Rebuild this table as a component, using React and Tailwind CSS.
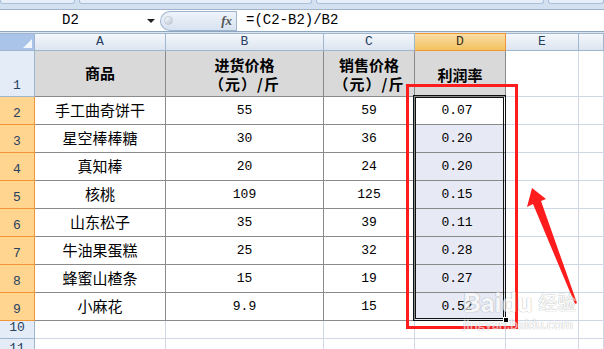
import React from 'react';

// column widths include the right border line
const colWidths = '35px 131px 158px 91px 91px 73px 1fr';
const cols = ['A', 'B', 'C', 'D', 'E', 'F'];

const rows = [
  { name: '手工曲奇饼干', buy: '55', sell: '59', rate: '0.07' },
  { name: '星空棒棒糖', buy: '30', sell: '36', rate: '0.20' },
  { name: '真知棒', buy: '20', sell: '24', rate: '0.20' },
  { name: '核桃', buy: '109', sell: '125', rate: '0.15' },
  { name: '山东松子', buy: '35', sell: '39', rate: '0.11' },
  { name: '牛油果蛋糕', buy: '25', sell: '32', rate: '0.28' },
  { name: '蜂蜜山楂条', buy: '15', sell: '19', rate: '0.27' },
  { name: '小麻花', buy: '9.9', sell: '15', rate: '0.52' },
];

const mono = "font-['Liberation_Mono',monospace]";
const cjk = "font-['Noto_Sans_CJK_SC',sans-serif]";

const RowHead = ({ n, active }) => (
  <div
    className={
      active
        ? `flex items-end justify-center pb-[1px] border-r border-b border-[#f29536] bg-[#ffd590] text-[13px] text-[#27415f] ${mono}`
        : `flex items-end justify-center pb-[1px] border-r border-b border-[#9eb6ce] bg-[#e4ecf7] text-[13px] text-[#27415f] ${mono}`
    }
  >
    {n}
  </div>
);

const Cell = ({ inTable, children, className = '' }) => (
  <div
    className={
      (inTable
        ? 'border-r border-b border-[#8a8a8a] '
        : 'border-r border-b border-[#d0d7e5] ') +
      'flex items-center justify-center overflow-hidden ' +
      className
    }
  >
    {children}
  </div>
);

// two-line bold heading used in B1 and C1
const TwoLine = ({ top }) => (
  <div className="flex flex-col items-center pt-[1px]">
    <div className="leading-[19px]">{top}</div>
    <div className="leading-[19px] tracking-[1px]">（元）/斤</div>
  </div>
);

const App = () => {
  return (
    <div className="relative w-[604px] h-[349px] overflow-hidden bg-white flex flex-col">
      {/* ribbon bottom edge */}
      <div className="h-[10px] shrink-0 bg-[#d3e0f0] border-b border-[#9fb3cb] flex gap-[4px] items-start">
        <div className="w-[75px] h-[4px] bg-[#e7eef8] border border-t-0 border-[#a9c0dc] rounded-b-[3px]" />
        <div className="w-[233px] h-[4px] bg-[#e7eef8] border border-t-0 border-[#a9c0dc] rounded-b-[3px]" />
        <div className="w-[228px] h-[4px] bg-[#e7eef8] border border-t-0 border-[#a9c0dc] rounded-b-[3px]" />
        <div className="flex-1 h-[4px] bg-[#e7eef8] border border-t-0 border-[#a9c0dc] rounded-b-[3px]" />
      </div>

      {/* formula bar */}
      <div className="h-[22px] shrink-0 flex items-center bg-white border-b border-[#8fa6c1]">
        <div className={`w-[141px] text-center text-[14px] text-black ${mono}`}>D2</div>
        <div className="w-[19px] flex justify-center">
          <div className="w-0 h-0 border-l-[4px] border-r-[4px] border-t-[4px] border-l-transparent border-r-transparent border-t-[#222]" />
        </div>
        <div className="w-[76px] h-[20px] flex items-center justify-between pl-[3px] pr-[4px] rounded-l-full border border-r-0 border-[#9fb4cd] bg-gradient-to-b from-[#eef3fa] to-[#d8e3f1]">
          <div className="w-[9px] h-[9px] rounded-full bg-gradient-to-br from-white to-[#b9c4d2] border border-[#c4ccd8]" />
          <span className="font-['Liberation_Serif',serif] italic font-bold text-[13px] text-[#555]">fx</span>
        </div>
        <div className="w-px h-[20px] bg-[#9fb4cd]" />
        <div className={`pl-[9px] text-[14px] text-black ${mono}`}>=(C2-B2)/B2</div>
      </div>
      <div className="h-px shrink-0 bg-[#dbe5f1]" />

      {/* sheet grid */}
      <div
        className="grid flex-1"
        style={{
          gridTemplateColumns: colWidths,
          gridTemplateRows: '18px 46px repeat(8, 28px) 18px 1fr',
        }}
      >
        {/* corner + column headers */}
        <div className="flex items-end justify-end p-[2px] border-t border-r border-b border-[#9eb6ce] bg-[#a9c4e8]">
          <svg width="9" height="9">
            <polygon points="9,0 9,9 0,9" fill="#f3f7fc" />
          </svg>
        </div>
        {cols.map((c) => (
          <div
            key={c}
            className={
              c === 'D'
                ? `flex items-center justify-center border-t border-r border-b border-[#f29536] bg-gradient-to-b from-[#f9dda4] to-[#f3c25f] text-[13px] text-[#3a3020] ${mono}`
                : `flex items-center justify-center border-t border-r border-b border-[#9eb6ce] bg-gradient-to-b from-[#f4f7fb] to-[#dce5f0] text-[13px] text-[#27415f] ${mono}`
            }
          >
            {c === 'F' ? '' : c}
          </div>
        ))}

        {/* row 1: headings */}
        <RowHead n="1" />
        <Cell inTable className={`bg-[#d9d9d9] font-bold text-[15px] text-black ${cjk}`}>商品</Cell>
        <Cell inTable className={`bg-[#d9d9d9] font-bold text-[15px] text-black ${cjk}`}>
          <TwoLine top="进货价格" />
        </Cell>
        <Cell inTable className={`bg-[#d9d9d9] font-bold text-[15px] text-black ${cjk}`}>
          <TwoLine top="销售价格" />
        </Cell>
        <Cell inTable className={`bg-[#d9d9d9] font-bold text-[15px] pt-[3px] text-black ${cjk}`}>利润率</Cell>
        <Cell />
        <Cell />

        {/* data rows */}
        {rows.map((r, i) => (
          <React.Fragment key={r.name}>
            <RowHead n={i + 2} active />
            <Cell inTable className={`text-[15px] text-black ${cjk}`}>{r.name}</Cell>
            <Cell inTable className={`text-[13px] text-black pt-[1px] ${mono}`}>{r.buy}</Cell>
            <Cell inTable className={`text-[13px] text-black pt-[1px] ${mono}`}>{r.sell}</Cell>
            <Cell
              inTable
              className={
                i === 0
                  ? `bg-white text-[13px] text-black pt-[1px] pr-[6px] ${mono}`
                  : `bg-[#e7eaf4] text-[13px] text-black pt-[1px] pr-[6px] ${mono}`
              }
            >
              {r.rate}
            </Cell>
            <Cell />
            <Cell />
          </React.Fragment>
        ))}

        {/* rows 10 and 11 */}
        {['10', '11'].map((n) => (
          <React.Fragment key={n}>
            <RowHead n={n} />
            {cols.map((c) => (
              <Cell key={c} />
            ))}
          </React.Fragment>
        ))}
      </div>

      {/* selection border around D2:D9 */}
      <div className="absolute left-[413px] top-[95px] w-[93px] h-[226px] border-[3px] border-double border-[#111] pointer-events-none" />
      <div className="absolute left-[503px] top-[317px] w-[6px] h-[6px] bg-black border border-white pointer-events-none" />

      {/* red highlight box */}
      <div className="absolute left-[406px] top-[84px] w-[112px] h-[245px] border-[3px] border-[#ff1c1c] pointer-events-none" />

      {/* red arrow */}
      <svg className="absolute left-0 top-0 pointer-events-none" width="604" height="349">
        <polygon
          points="532,188 546,199 541,201 577,303 575,304 533,204 527,207"
          fill="#ff1c1c"
        />
      </svg>

      {/* watermark */}
      <div className="absolute left-[463px] top-[288px] pointer-events-none opacity-60 flex flex-col items-start">
        <div className="flex items-center gap-[6px] h-[28px]">
          <span className="font-['Lato',sans-serif] font-black text-[27px] leading-[28px] text-white [text-shadow:0_0_1px_#888,0_0_1px_#888]">Baidu</span>
          <span className={`text-[19px] leading-[28px] text-white [text-shadow:0_0_1px_#888,0_0_1px_#888] ${cjk}`}>经验</span>
        </div>
        <span className="font-['Lato',sans-serif] text-[14px] leading-[16px] text-white [text-shadow:0_0_1px_#999,0_0_1px_#999]">jingyan.baidu.com</span>
      </div>
    </div>
  );
};

export default App;
